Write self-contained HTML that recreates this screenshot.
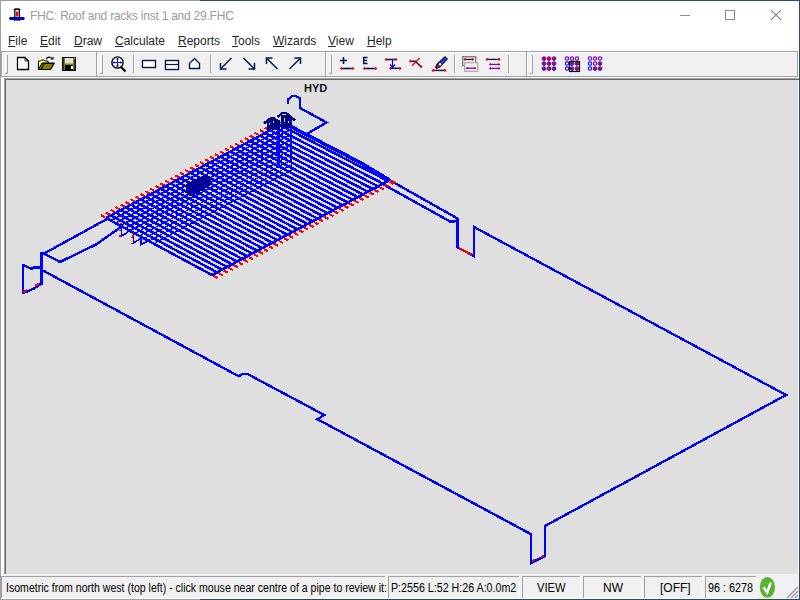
<!DOCTYPE html>
<html><head><meta charset="utf-8">
<style>
*{margin:0;padding:0;box-sizing:border-box}
html,body{width:800px;height:600px;overflow:hidden;background:#fff;font-family:"Liberation Sans",sans-serif}
.a{position:absolute}
.t{position:absolute;white-space:pre;font-size:12px;line-height:14px;color:#000}
.mn{color:#262626}
.mn u{text-decoration:underline;text-underline-offset:1px;text-decoration-thickness:1px}
</style></head><body>
<!-- window borders -->
<div class="a" style="left:0;top:0;width:200px;height:1px;background:#9a9a9a"></div>
<div class="a" style="left:200px;top:0;width:600px;height:1px;background:#2e4a62"></div>
<div class="a" style="left:0;top:0;width:1px;height:600px;background:#a0a0a0"></div>
<div class="a" style="left:799px;top:0;width:1px;height:600px;background:#2e4a62"></div>
<div class="a" style="left:0;top:599px;width:200px;height:1px;background:#a0a0a0"></div>
<div class="a" style="left:200px;top:599px;width:600px;height:1px;background:#2e4a62"></div>

<!-- title bar -->
<svg class="a" style="left:8px;top:7px" width="18" height="16" viewBox="0 0 18 16">
  <rect x="1.2" y="10" width="15.4" height="3" rx="1" fill="#0000c8"/>
  <rect x="5.5" y="12" width="7" height="1.6" fill="#000070"/>
  <path d="M5 3L7 1.2H11L13 3Z" fill="#001050"/>
  <rect x="6.2" y="3" width="1.3" height="7.5" fill="#000020"/>
  <rect x="10.7" y="3" width="1.3" height="7.5" fill="#000020"/>
  <rect x="8" y="4.5" width="2.3" height="5" fill="#ff0000"/>
</svg>
<div class="t" id="title" style="left:30px;top:9px;color:#9c9c9c;font-size:12px;letter-spacing:-0.23px">FHC: Roof and racks inst 1 and 29.FHC</div>
<div class="a" style="left:680px;top:15px;width:10px;height:1px;background:#8a8a8a"></div>
<div class="a" style="left:725px;top:10px;width:10px;height:10px;border:1px solid #8a8a8a"></div>
<svg class="a" style="left:770px;top:9px" width="12" height="12"><path d="M1 1L11 11M11 1L1 11" stroke="#8a8a8a" stroke-width="1.1"/></svg>

<!-- menu -->
<div class="t mn" style="left:8px;top:34px"><u>F</u>ile</div>
<div class="t mn" style="left:40px;top:34px"><u>E</u>dit</div>
<div class="t mn" style="left:74px;top:34px"><u>D</u>raw</div>
<div class="t mn" style="left:115px;top:34px"><u>C</u>alculate</div>
<div class="t mn" style="left:178px;top:34px"><u>R</u>eports</div>
<div class="t mn" style="left:232px;top:34px"><u>T</u>ools</div>
<div class="t mn" style="left:273px;top:34px"><u>W</u>izards</div>
<div class="t mn" style="left:328px;top:34px"><u>V</u>iew</div>
<div class="t mn" style="left:367px;top:34px"><u>H</u>elp</div>

<!-- toolbar -->
<div class="a" style="left:1px;top:51px;width:798px;height:27px;background:#f0f0f0"></div>
<div class="a" style="left:1px;top:51px;width:797px;height:1px;background:#a0a0a0"></div>
<div class="a" style="left:1px;top:51px;width:1px;height:26px;background:#a0a0a0"></div>
<div class="a" style="left:2px;top:52px;width:795px;height:1px;background:#fff"></div>
<div class="a" style="left:2px;top:52px;width:1px;height:24px;background:#fff"></div>
<div class="a" style="left:1px;top:76px;width:797px;height:1px;background:#a0a0a0"></div>
<div class="a" style="left:797px;top:51px;width:1px;height:26px;background:#a0a0a0"></div>
<div class="a" style="left:1px;top:77px;width:798px;height:1px;background:#fff"></div>
<div class="a" style="left:798px;top:51px;width:1px;height:27px;background:#fff"></div>

<!-- canvas -->
<div class="a" style="left:1px;top:78px;width:798px;height:496px;background:#fff"></div>
<div class="a" style="left:4px;top:78px;width:794px;height:496px;background:#dfdfdf"></div>
<div class="a" style="left:4px;top:78px;width:795px;height:1px;background:#a0a0a0"></div>
<div class="a" style="left:4px;top:78px;width:1px;height:496px;background:#a0a0a0"></div>
<div class="a" style="left:5px;top:79px;width:794px;height:1px;background:#696969"></div>
<div class="a" style="left:5px;top:79px;width:1px;height:495px;background:#696969"></div>

<!-- status bar -->
<div class="a" style="left:1px;top:574px;width:798px;height:25px;background:#f0f0f0"></div>
<div class="a" style="left:1px;top:576px;width:384px;height:1px;background:#a0a0a0"></div>
<div class="a" style="left:1px;top:576px;width:1px;height:22px;background:#a0a0a0"></div>
<div class="a" style="left:385px;top:576px;width:1px;height:23px;background:#fff"></div>
<div class="a" style="left:1px;top:598px;width:385px;height:1px;background:#fff"></div>
<div class="a" style="left:388px;top:576px;width:131px;height:1px;background:#a0a0a0"></div>
<div class="a" style="left:388px;top:576px;width:1px;height:22px;background:#a0a0a0"></div>
<div class="a" style="left:519px;top:576px;width:1px;height:23px;background:#fff"></div>
<div class="a" style="left:388px;top:598px;width:132px;height:1px;background:#fff"></div>
<div class="a" style="left:522px;top:576px;width:58px;height:1px;background:#a0a0a0"></div>
<div class="a" style="left:522px;top:576px;width:1px;height:22px;background:#a0a0a0"></div>
<div class="a" style="left:580px;top:576px;width:1px;height:23px;background:#fff"></div>
<div class="a" style="left:522px;top:598px;width:59px;height:1px;background:#fff"></div>
<div class="a" style="left:583px;top:576px;width:58px;height:1px;background:#a0a0a0"></div>
<div class="a" style="left:583px;top:576px;width:1px;height:22px;background:#a0a0a0"></div>
<div class="a" style="left:641px;top:576px;width:1px;height:23px;background:#fff"></div>
<div class="a" style="left:583px;top:598px;width:59px;height:1px;background:#fff"></div>
<div class="a" style="left:644px;top:576px;width:58px;height:1px;background:#a0a0a0"></div>
<div class="a" style="left:644px;top:576px;width:1px;height:22px;background:#a0a0a0"></div>
<div class="a" style="left:702px;top:576px;width:1px;height:23px;background:#fff"></div>
<div class="a" style="left:644px;top:598px;width:59px;height:1px;background:#fff"></div>
<div class="a" style="left:705px;top:576px;width:51px;height:1px;background:#a0a0a0"></div>
<div class="a" style="left:705px;top:576px;width:1px;height:22px;background:#a0a0a0"></div>
<div class="a" style="left:756px;top:576px;width:1px;height:23px;background:#fff"></div>
<div class="a" style="left:705px;top:598px;width:52px;height:1px;background:#fff"></div>
<div class="t" style="left:6px;top:581px;transform-origin:0 0;transform:scaleX(0.88)">Isometric from north west (top left) - click mouse near centre of a pipe to review it:</div>
<div class="t" style="left:391px;top:581px;transform-origin:0 0;transform:scaleX(0.89)">P:2556 L:52 H:26 A:0.0m2</div>
<div class="t" style="left:537px;top:581px;transform-origin:0 0;transform:scaleX(0.93)">VIEW</div>
<div class="t" style="left:603px;top:581px;transform-origin:0 0;transform:scaleX(1.0)">NW</div>
<div class="t" style="left:660px;top:581px;transform-origin:0 0;transform:scaleX(1.0)">[OFF]</div>
<div class="t" style="left:708px;top:581px;transform-origin:0 0;transform:scaleX(0.9)">96 : 6278</div><svg class="a" style="left:0;top:570px" width="800" height="30">
<ellipse cx="767.4" cy="17.4" rx="7.6" ry="10.4" fill="#5cb22e"/>
<path d="M763.5 17.2L767.2 22.4L770.7 12.6" fill="none" stroke="#fff" stroke-width="2.6"/>
<g stroke="#a0a0a0" stroke-width="1.4"><line x1="787" y1="28" x2="798" y2="17"/><line x1="791" y1="28" x2="798" y2="21"/><line x1="795" y1="28" x2="798" y2="25"/></g>
</svg>

<svg id="draw" class="a" style="left:0;top:0" width="800" height="600"><defs><clipPath id="cv"><rect x="6" y="80" width="792" height="494"/></clipPath></defs><g clip-path="url(#cv)">
<g shape-rendering="crispEdges"><path d="M45 253L107 219" fill="none" stroke="#0000ff" stroke-width="2.4" stroke-linejoin="miter" />
<path d="M45 254L60 262L96 244.5L121 227" fill="none" stroke="#0000ff" stroke-width="2.4" stroke-linejoin="miter" />
<rect x="40" y="252" width="3" height="32.5" fill="#0000ff"/>
<rect x="40" y="252" width="5" height="2.5" fill="#0000ff"/>
<path d="M23 264V293.5M23 265L32 269L34 267.5L41 267.5M23.5 293L35 288L41.5 283.5" fill="none" stroke="#0000ff" stroke-width="2.4" stroke-linejoin="miter" />
<path d="M43 270.5L238.75 376.25L243 373.8L247.5 374L324.25 415L317.5 419.25L531 534.2V563L545 556V526L786 395L474 227V256L457.5 247.5V218.5L389.6 180.1" fill="none" stroke="#0000ff" stroke-width="2.4" stroke-linejoin="miter" />
<rect x="456.2" y="218" width="2.6" height="30" fill="#0000ff"/>
<path d="M381.75 183.5L450.4 221.7L457.7 221" fill="none" stroke="#0000ff" stroke-width="2.4" stroke-linejoin="miter" />
<path d="M288 104V99.5L292 96.2L296 96.2L300 98.5V108L326.5 122.5L307.5 133.5" fill="none" stroke="#0000ff" stroke-width="2.4" stroke-linejoin="miter" />
<line x1="106" y1="218" x2="212" y2="275" stroke="#0000ff" stroke-width="2.5"/>
<line x1="100.72" y1="215.16" x2="104.68" y2="217.29" stroke="#ff0000" stroke-width="2.1"/>
<line x1="213.59" y1="275.85" x2="217.72" y2="278.08" stroke="#ff0000" stroke-width="2.1"/>
<line x1="110.97" y1="215.34" x2="217.03" y2="272.31" stroke="#0000ff" stroke-width="2.5"/>
<line x1="105.69" y1="212.5" x2="109.65" y2="214.63" stroke="#ff0000" stroke-width="2.1"/>
<line x1="218.61" y1="273.17" x2="222.75" y2="275.39" stroke="#ff0000" stroke-width="2.1"/>
<line x1="115.94" y1="212.69" x2="222.06" y2="269.63" stroke="#0000ff" stroke-width="2.5"/>
<line x1="110.66" y1="209.85" x2="114.62" y2="211.98" stroke="#ff0000" stroke-width="2.1"/>
<line x1="223.64" y1="270.48" x2="227.78" y2="272.7" stroke="#ff0000" stroke-width="2.1"/>
<line x1="120.91" y1="210.03" x2="227.09" y2="266.94" stroke="#0000ff" stroke-width="2.5"/>
<line x1="115.63" y1="207.19" x2="119.59" y2="209.32" stroke="#ff0000" stroke-width="2.1"/>
<line x1="228.67" y1="267.79" x2="232.81" y2="270.01" stroke="#ff0000" stroke-width="2.1"/>
<line x1="125.89" y1="207.37" x2="232.11" y2="264.26" stroke="#0000ff" stroke-width="2.5"/>
<line x1="120.6" y1="204.54" x2="124.56" y2="206.66" stroke="#ff0000" stroke-width="2.1"/>
<line x1="233.7" y1="265.11" x2="237.84" y2="267.33" stroke="#ff0000" stroke-width="2.1"/>
<line x1="130.86" y1="204.71" x2="237.14" y2="261.57" stroke="#0000ff" stroke-width="2.5"/>
<line x1="125.57" y1="201.88" x2="129.53" y2="204.01" stroke="#ff0000" stroke-width="2.1"/>
<line x1="238.73" y1="262.42" x2="242.87" y2="264.64" stroke="#ff0000" stroke-width="2.1"/>
<line x1="135.83" y1="202.06" x2="242.17" y2="258.89" stroke="#0000ff" stroke-width="2.5"/>
<line x1="130.54" y1="199.23" x2="134.51" y2="201.35" stroke="#ff0000" stroke-width="2.1"/>
<line x1="243.76" y1="259.73" x2="247.9" y2="261.95" stroke="#ff0000" stroke-width="2.1"/>
<line x1="140.8" y1="199.4" x2="247.2" y2="256.2" stroke="#0000ff" stroke-width="2.5"/>
<line x1="135.51" y1="196.57" x2="139.48" y2="198.69" stroke="#ff0000" stroke-width="2.1"/>
<line x1="248.79" y1="257.05" x2="252.93" y2="259.26" stroke="#ff0000" stroke-width="2.1"/>
<line x1="145.77" y1="196.74" x2="252.23" y2="253.51" stroke="#0000ff" stroke-width="2.5"/>
<line x1="140.48" y1="193.92" x2="144.45" y2="196.04" stroke="#ff0000" stroke-width="2.1"/>
<line x1="253.82" y1="254.36" x2="257.96" y2="256.57" stroke="#ff0000" stroke-width="2.1"/>
<line x1="150.74" y1="194.09" x2="257.26" y2="250.83" stroke="#0000ff" stroke-width="2.5"/>
<line x1="145.45" y1="191.26" x2="149.42" y2="193.38" stroke="#ff0000" stroke-width="2.1"/>
<line x1="258.85" y1="251.67" x2="262.99" y2="253.88" stroke="#ff0000" stroke-width="2.1"/>
<line x1="155.71" y1="191.43" x2="262.29" y2="248.14" stroke="#0000ff" stroke-width="2.5"/>
<line x1="150.42" y1="188.61" x2="154.39" y2="190.72" stroke="#ff0000" stroke-width="2.1"/>
<line x1="263.87" y1="248.99" x2="268.02" y2="251.2" stroke="#ff0000" stroke-width="2.1"/>
<line x1="160.69" y1="188.77" x2="267.31" y2="245.46" stroke="#0000ff" stroke-width="2.5"/>
<line x1="155.39" y1="185.95" x2="159.36" y2="188.07" stroke="#ff0000" stroke-width="2.1"/>
<line x1="268.9" y1="246.3" x2="273.05" y2="248.51" stroke="#ff0000" stroke-width="2.1"/>
<line x1="165.66" y1="186.11" x2="272.34" y2="242.77" stroke="#0000ff" stroke-width="2.5"/>
<line x1="160.36" y1="183.3" x2="164.33" y2="185.41" stroke="#ff0000" stroke-width="2.1"/>
<line x1="273.93" y1="243.62" x2="278.08" y2="245.82" stroke="#ff0000" stroke-width="2.1"/>
<line x1="170.63" y1="183.46" x2="277.37" y2="240.09" stroke="#0000ff" stroke-width="2.5"/>
<line x1="165.33" y1="180.65" x2="169.3" y2="182.75" stroke="#ff0000" stroke-width="2.1"/>
<line x1="278.96" y1="240.93" x2="283.11" y2="243.13" stroke="#ff0000" stroke-width="2.1"/>
<line x1="175.6" y1="180.8" x2="282.4" y2="237.4" stroke="#0000ff" stroke-width="2.5"/>
<line x1="170.3" y1="177.99" x2="174.27" y2="180.1" stroke="#ff0000" stroke-width="2.1"/>
<line x1="283.99" y1="238.24" x2="288.14" y2="240.44" stroke="#ff0000" stroke-width="2.1"/>
<line x1="180.57" y1="178.14" x2="287.43" y2="234.71" stroke="#0000ff" stroke-width="2.5"/>
<line x1="175.27" y1="175.34" x2="179.25" y2="177.44" stroke="#ff0000" stroke-width="2.1"/>
<line x1="289.02" y1="235.56" x2="293.17" y2="237.76" stroke="#ff0000" stroke-width="2.1"/>
<line x1="185.54" y1="175.49" x2="292.46" y2="232.03" stroke="#0000ff" stroke-width="2.5"/>
<line x1="180.24" y1="172.68" x2="184.22" y2="174.78" stroke="#ff0000" stroke-width="2.1"/>
<line x1="294.05" y1="232.87" x2="298.2" y2="235.07" stroke="#ff0000" stroke-width="2.1"/>
<line x1="190.51" y1="172.83" x2="297.49" y2="229.34" stroke="#0000ff" stroke-width="2.5"/>
<line x1="185.21" y1="170.03" x2="189.19" y2="172.13" stroke="#ff0000" stroke-width="2.1"/>
<line x1="299.08" y1="230.18" x2="303.23" y2="232.38" stroke="#ff0000" stroke-width="2.1"/>
<line x1="195.49" y1="170.17" x2="302.51" y2="226.66" stroke="#0000ff" stroke-width="2.5"/>
<line x1="190.18" y1="167.37" x2="194.16" y2="169.47" stroke="#ff0000" stroke-width="2.1"/>
<line x1="304.11" y1="227.5" x2="308.26" y2="229.69" stroke="#ff0000" stroke-width="2.1"/>
<line x1="200.46" y1="167.51" x2="307.54" y2="223.97" stroke="#0000ff" stroke-width="2.5"/>
<line x1="195.15" y1="164.72" x2="199.13" y2="166.81" stroke="#ff0000" stroke-width="2.1"/>
<line x1="309.14" y1="224.81" x2="313.29" y2="227" stroke="#ff0000" stroke-width="2.1"/>
<line x1="205.43" y1="164.86" x2="312.57" y2="221.29" stroke="#0000ff" stroke-width="2.5"/>
<line x1="200.12" y1="162.06" x2="204.1" y2="164.16" stroke="#ff0000" stroke-width="2.1"/>
<line x1="314.16" y1="222.12" x2="318.32" y2="224.31" stroke="#ff0000" stroke-width="2.1"/>
<line x1="210.4" y1="162.2" x2="317.6" y2="218.6" stroke="#0000ff" stroke-width="2.5"/>
<line x1="205.09" y1="159.41" x2="209.07" y2="161.5" stroke="#ff0000" stroke-width="2.1"/>
<line x1="319.19" y1="219.44" x2="323.35" y2="221.63" stroke="#ff0000" stroke-width="2.1"/>
<line x1="215.37" y1="159.54" x2="322.63" y2="215.91" stroke="#0000ff" stroke-width="2.5"/>
<line x1="210.06" y1="156.75" x2="214.04" y2="158.85" stroke="#ff0000" stroke-width="2.1"/>
<line x1="324.22" y1="216.75" x2="328.38" y2="218.94" stroke="#ff0000" stroke-width="2.1"/>
<line x1="220.34" y1="156.89" x2="327.66" y2="213.23" stroke="#0000ff" stroke-width="2.5"/>
<line x1="215.03" y1="154.1" x2="219.01" y2="156.19" stroke="#ff0000" stroke-width="2.1"/>
<line x1="329.25" y1="214.07" x2="333.41" y2="216.25" stroke="#ff0000" stroke-width="2.1"/>
<line x1="225.31" y1="154.23" x2="332.69" y2="210.54" stroke="#0000ff" stroke-width="2.5"/>
<line x1="220" y1="151.44" x2="223.99" y2="153.53" stroke="#ff0000" stroke-width="2.1"/>
<line x1="334.28" y1="211.38" x2="338.44" y2="213.56" stroke="#ff0000" stroke-width="2.1"/>
<line x1="230.29" y1="151.57" x2="337.71" y2="207.86" stroke="#0000ff" stroke-width="2.5"/>
<line x1="224.97" y1="148.79" x2="228.96" y2="150.88" stroke="#ff0000" stroke-width="2.1"/>
<line x1="339.31" y1="208.69" x2="343.47" y2="210.87" stroke="#ff0000" stroke-width="2.1"/>
<line x1="235.26" y1="148.91" x2="342.74" y2="205.17" stroke="#0000ff" stroke-width="2.5"/>
<line x1="229.94" y1="146.13" x2="233.93" y2="148.22" stroke="#ff0000" stroke-width="2.1"/>
<line x1="344.34" y1="206.01" x2="348.5" y2="208.19" stroke="#ff0000" stroke-width="2.1"/>
<line x1="240.23" y1="146.26" x2="347.77" y2="202.49" stroke="#0000ff" stroke-width="2.5"/>
<line x1="234.91" y1="143.48" x2="238.9" y2="145.56" stroke="#ff0000" stroke-width="2.1"/>
<line x1="349.37" y1="203.32" x2="353.53" y2="205.5" stroke="#ff0000" stroke-width="2.1"/>
<line x1="245.2" y1="143.6" x2="352.8" y2="199.8" stroke="#0000ff" stroke-width="2.5"/>
<line x1="239.88" y1="140.82" x2="243.87" y2="142.91" stroke="#ff0000" stroke-width="2.1"/>
<line x1="354.4" y1="200.63" x2="358.56" y2="202.81" stroke="#ff0000" stroke-width="2.1"/>
<line x1="250.17" y1="140.94" x2="357.83" y2="197.11" stroke="#0000ff" stroke-width="2.5"/>
<line x1="244.85" y1="138.17" x2="248.84" y2="140.25" stroke="#ff0000" stroke-width="2.1"/>
<line x1="359.42" y1="197.95" x2="363.59" y2="200.12" stroke="#ff0000" stroke-width="2.1"/>
<line x1="255.14" y1="138.29" x2="362.86" y2="194.43" stroke="#0000ff" stroke-width="2.5"/>
<line x1="249.82" y1="135.51" x2="253.81" y2="137.59" stroke="#ff0000" stroke-width="2.1"/>
<line x1="364.45" y1="195.26" x2="368.62" y2="197.43" stroke="#ff0000" stroke-width="2.1"/>
<line x1="260.11" y1="135.63" x2="367.89" y2="191.74" stroke="#0000ff" stroke-width="2.5"/>
<line x1="254.79" y1="132.86" x2="258.78" y2="134.94" stroke="#ff0000" stroke-width="2.1"/>
<line x1="369.48" y1="192.57" x2="373.65" y2="194.74" stroke="#ff0000" stroke-width="2.1"/>
<line x1="265.09" y1="132.97" x2="372.91" y2="189.06" stroke="#0000ff" stroke-width="2.5"/>
<line x1="259.76" y1="130.2" x2="263.75" y2="132.28" stroke="#ff0000" stroke-width="2.1"/>
<line x1="374.51" y1="189.89" x2="378.68" y2="192.06" stroke="#ff0000" stroke-width="2.1"/>
<line x1="270.06" y1="130.31" x2="377.94" y2="186.37" stroke="#0000ff" stroke-width="2.5"/>
<line x1="264.73" y1="127.55" x2="268.73" y2="129.62" stroke="#ff0000" stroke-width="2.1"/>
<line x1="379.54" y1="187.2" x2="383.71" y2="189.37" stroke="#ff0000" stroke-width="2.1"/>
<line x1="275.03" y1="127.66" x2="382.97" y2="183.69" stroke="#0000ff" stroke-width="2.5"/>
<line x1="269.7" y1="124.89" x2="273.7" y2="126.97" stroke="#ff0000" stroke-width="2.1"/>
<line x1="384.57" y1="184.51" x2="388.74" y2="186.68" stroke="#ff0000" stroke-width="2.1"/>
<line x1="280" y1="125" x2="388" y2="181" stroke="#0000ff" stroke-width="2.5"/>
<line x1="274.67" y1="122.24" x2="278.67" y2="124.31" stroke="#ff0000" stroke-width="2.1"/>
<line x1="389.6" y1="181.83" x2="393.77" y2="183.99" stroke="#ff0000" stroke-width="2.1"/>
<line x1="212" y1="275" x2="388" y2="181" stroke="#0000ff" stroke-width="2.6"/>
<line x1="106" y1="218" x2="280" y2="125" stroke="#0000ff" stroke-width="2.4"/>
<line x1="110.77" y1="220.56" x2="284.86" y2="127.52" stroke="#0000ff" stroke-width="1.7"/>
<line x1="115.54" y1="223.13" x2="289.72" y2="130.04" stroke="#0000ff" stroke-width="1.7"/>
<line x1="120.31" y1="225.69" x2="292" y2="133.94" stroke="#0000ff" stroke-width="1.7"/>
<line x1="125.08" y1="228.26" x2="292" y2="139.06" stroke="#0000ff" stroke-width="1.7"/>
<line x1="129.85" y1="230.82" x2="292" y2="144.17" stroke="#0000ff" stroke-width="1.7"/>
<line x1="134.62" y1="233.39" x2="292" y2="149.29" stroke="#0000ff" stroke-width="1.2"/>
<line x1="139.39" y1="235.96" x2="292" y2="154.41" stroke="#0000ff" stroke-width="1.2"/>
<line x1="144.16" y1="238.52" x2="292" y2="159.52" stroke="#0000ff" stroke-width="1.2"/>
<line x1="148.93" y1="241.09" x2="292" y2="164.64" stroke="#0000ff" stroke-width="1.2"/>
<line x1="153.7" y1="243.65" x2="292" y2="169.76" stroke="#0000ff" stroke-width="1.2"/>
<path d="M283 122.5L360 162.5L389.6 180.1" fill="none" stroke="#0000ff" stroke-width="3.6" stroke-linejoin="miter" />
<rect x="277" y="120" width="3" height="45" fill="#0000ff"/>
<rect x="290" y="118" width="2" height="45" fill="#0000ff"/>
<path d="M121.3 223.5V236L127.5 232.5V227" fill="none" stroke="#0000ff" stroke-width="1.6" stroke-linejoin="miter" />
<path d="M133.3 232V243L141 238.5V244.5L150 240" fill="none" stroke="#0000ff" stroke-width="1.6" stroke-linejoin="miter" />
<rect x="120" y="222.7" width="2.2" height="1.6" fill="#ff0000"/>
<rect x="119" y="229.7" width="2.2" height="1.6" fill="#ff0000"/>
<rect x="119" y="235.2" width="2.2" height="1.6" fill="#ff0000"/>
<rect x="130.5" y="236.7" width="2.2" height="1.6" fill="#ff0000"/>
<rect x="132" y="235.2" width="2.2" height="1.6" fill="#ff0000"/>
<rect x="131" y="242.7" width="2.2" height="1.6" fill="#ff0000"/>
<line x1="23" y1="292.5" x2="27" y2="290" stroke="#ff0000" stroke-width="2"/>
<line x1="35" y1="286" x2="39" y2="283.5" stroke="#ff0000" stroke-width="2"/>
<line x1="532" y1="561" x2="535" y2="559.5" stroke="#ff0000" stroke-width="2"/>
<line x1="541" y1="557" x2="544" y2="555.5" stroke="#ff0000" stroke-width="2"/>
<line x1="459" y1="248" x2="472" y2="255" stroke="#ff0000" stroke-width="2"/>
<line x1="391" y1="180.5" x2="395" y2="183" stroke="#ff0000" stroke-width="2.2"/>
<path d="M264 123.5L268.5 119.5L271.5 117.8L274 118L280.5 123.5" fill="none" stroke="#000080" stroke-width="2.4"/>
<path d="M267 120L275 119L280 123V130H267Z" fill="#000080"/>
<rect x="269" y="122.5" width="1.2" height="2.5" fill="#dfdfdf"/><rect x="272.5" y="120.5" width="1.2" height="2" fill="#dfdfdf"/>
<path d="M277.5 117L281.5 113.5L284.5 112.8L287.5 114L295 120.5" fill="none" stroke="#000080" stroke-width="2.4"/>
<path d="M280.5 115L288 114.5L290.5 117V128H280.5Z" fill="#000080"/>
<rect x="283.8" y="117.8" width="1.2" height="4" fill="#dfdfdf"/><rect x="287.5" y="120.5" width="1.2" height="2" fill="#dfdfdf"/>
<path d="M186 184L206 174.5L211 178V185L193 196H189L186 190Z" fill="#000080"/>
<path d="M188 189L208 178M190 194L210 183" stroke="#0000ff" stroke-width="1"/></g><text x="304" y="92" font-family="Liberation Sans" font-weight="bold" font-size="11" fill="#101010">HYD</text>
</g></svg>
<svg id="tb" class="a" style="left:0;top:0" width="800" height="80">
<rect x="96" y="52" width="1" height="24" fill="#a0a0a0"/>
<rect x="97" y="52" width="1" height="24" fill="#ffffff"/>
<rect x="325" y="52" width="1" height="24" fill="#a0a0a0"/>
<rect x="326" y="52" width="1" height="24" fill="#ffffff"/>
<rect x="526" y="52" width="1" height="24" fill="#a0a0a0"/>
<rect x="527" y="52" width="1" height="24" fill="#ffffff"/>
<rect x="5" y="55" width="1" height="18" fill="#ffffff"/>
<rect x="5" y="55" width="3" height="1" fill="#ffffff"/>
<rect x="7" y="55" width="1" height="19" fill="#a0a0a0"/>
<rect x="5" y="73" width="3" height="1" fill="#a0a0a0"/>
<rect x="100" y="55" width="1" height="18" fill="#ffffff"/>
<rect x="100" y="55" width="3" height="1" fill="#ffffff"/>
<rect x="102" y="55" width="1" height="19" fill="#a0a0a0"/>
<rect x="100" y="73" width="3" height="1" fill="#a0a0a0"/>
<rect x="329" y="55" width="1" height="18" fill="#ffffff"/>
<rect x="329" y="55" width="3" height="1" fill="#ffffff"/>
<rect x="331" y="55" width="1" height="19" fill="#a0a0a0"/>
<rect x="329" y="73" width="3" height="1" fill="#a0a0a0"/>
<rect x="530" y="55" width="1" height="18" fill="#ffffff"/>
<rect x="530" y="55" width="3" height="1" fill="#ffffff"/>
<rect x="532" y="55" width="1" height="19" fill="#a0a0a0"/>
<rect x="530" y="73" width="3" height="1" fill="#a0a0a0"/>
<rect x="133" y="55" width="1" height="18" fill="#a0a0a0"/>
<rect x="134" y="55" width="1" height="18" fill="#ffffff"/>
<rect x="210" y="55" width="1" height="18" fill="#a0a0a0"/>
<rect x="211" y="55" width="1" height="18" fill="#ffffff"/>
<rect x="454" y="55" width="1" height="18" fill="#a0a0a0"/>
<rect x="455" y="55" width="1" height="18" fill="#ffffff"/>
<rect x="508" y="55" width="1" height="18" fill="#a0a0a0"/>
<rect x="509" y="55" width="1" height="18" fill="#ffffff"/>
<path d="M17.5 57.5H25L28.5 61V69.5H17.5Z" fill="#fff" stroke="#000" stroke-width="1.3"/>
<path d="M25 57.5V61H28.5" fill="none" stroke="#000" stroke-width="0.8"/>
<path d="M38.5 63V69.5H50L53.5 63Z" fill="#808000" stroke="#000" stroke-width="1.2"/>
<path d="M38.5 69.5V61H40.5L41.5 60H44L45 61H48V63H42Z" fill="#ffff40" stroke="#000" stroke-width="1"/>
<path d="M41 69.5L44 63.5H54L50.5 69.5Z" fill="#808000" stroke="#000" stroke-width="1.2"/>
<path d="M46 59Q49 55.5 52 58.5" fill="none" stroke="#000" stroke-width="1.2"/><path d="M50.5 59.5H53.5V56.5Z" fill="#000"/>
<rect x="62" y="57" width="14" height="14" fill="#000"/>
<rect x="63.5" y="58" width="11" height="12" fill="#808000"/>
<rect x="65" y="58" width="8" height="5.5" fill="#e0e0e0"/>
<rect x="65" y="65" width="8" height="5" fill="#000"/>
<rect x="71" y="66" width="2" height="3" fill="#fff"/>
<rect x="74" y="58" width="1" height="1" fill="#fff"/>
<line x1="121" y1="67" x2="125.5" y2="71.5" stroke="#000" stroke-width="2.2"/>
<circle cx="117.5" cy="62.5" r="5.6" fill="#fff" stroke="#000" stroke-width="1.4"/>
<path d="M113 62.5H122M117.5 58V67" stroke="#0010e0" stroke-width="1.1"/>
<path d="M112.5 62.5l2-1.6v3.2zM122.5 62.5l-2-1.6v3.2zM117.5 57.5l-1.6 2h3.2zM117.5 67.5l-1.6-2h3.2z" fill="#0010e0"/>
<rect x="142.5" y="60.5" width="13" height="7" fill="#fff" stroke="#0a1450" stroke-width="1.4"/>
<rect x="165.5" y="60.5" width="13" height="9" fill="#fff" stroke="#0a1450" stroke-width="1.4"/>
<line x1="165" y1="64.5" x2="179" y2="64.5" stroke="#0a1450" stroke-width="1.2"/>
<path d="M189.5 68.5V63.5L194.5 58.5L199.5 63.5V68.5Z" fill="#fff" stroke="#0a1450" stroke-width="1.4"/>
<line x1="231.5" y1="58" x2="220.5" y2="69" stroke="#0a1450" stroke-width="1.5"/>
<path d="M220.5 63V69H226.5" fill="none" stroke="#0a1450" stroke-width="1.5"/>
<line x1="243.5" y1="58" x2="254.5" y2="69" stroke="#0a1450" stroke-width="1.5"/>
<path d="M254.5 63V69H248.5" fill="none" stroke="#0a1450" stroke-width="1.5"/>
<line x1="277.5" y1="69" x2="266.5" y2="58" stroke="#0a1450" stroke-width="1.5"/>
<path d="M266.5 64V58H272.5" fill="none" stroke="#0a1450" stroke-width="1.5"/>
<line x1="289.5" y1="69" x2="300.5" y2="58" stroke="#0a1450" stroke-width="1.5"/>
<path d="M300.5 64V58H294.5" fill="none" stroke="#0a1450" stroke-width="1.5"/>
<path d="M340 60.5H347M343.5 57V64" stroke="#0a1450" stroke-width="1.6"/>
<line x1="341.5" y1="68.5" x2="352.5" y2="68.5" stroke="#0a1450" stroke-width="1.6"/>
<path d="M339.7 68.5L341.3 66.9L342.90000000000003 68.5L341.3 70.1Z" fill="#ff0000"/>
<path d="M351.2 68.5L352.8 66.9L354.40000000000003 68.5L352.8 70.1Z" fill="#ff0000"/>
<path d="M367.5 57.5H363.7V63.6H367.5M363.7 60.5H367" fill="none" stroke="#0a1450" stroke-width="1.5"/>
<line x1="364.5" y1="68.5" x2="375.5" y2="68.5" stroke="#0a1450" stroke-width="1.6"/>
<path d="M362.79999999999995 68.5L364.4 66.9L366.0 68.5L364.4 70.1Z" fill="#ff0000"/>
<path d="M374.2 68.5L375.8 66.9L377.40000000000003 68.5L375.8 70.1Z" fill="#ff0000"/>
<line x1="386" y1="59.5" x2="396" y2="59.5" stroke="#0a1450" stroke-width="1.6"/>
<path d="M384.4 59.5L386 57.9L387.6 59.5L386 61.1Z" fill="#ff0000"/>
<path d="M394.4 59.5L396 57.9L397.6 59.5L396 61.1Z" fill="#ff0000"/>
<line x1="390.5" y1="68.3" x2="400" y2="68.3" stroke="#0a1450" stroke-width="1.6"/>
<path d="M388.9 68.3L390.5 66.7L392.1 68.3L390.5 69.89999999999999Z" fill="#ff0000"/>
<path d="M398.4 68.3L400 66.7L401.6 68.3L400 69.89999999999999Z" fill="#ff0000"/>
<path d="M392.5 59.5V67.5M390 64.5L392.5 67.5L395 64.5" fill="none" stroke="#0000d0" stroke-width="1.2"/>
<path d="M410.5 61.2H415.3L421 66.7" fill="none" stroke="#0a1450" stroke-width="1.5"/>
<line x1="419.6" y1="58" x2="412" y2="65.7" stroke="#ff0000" stroke-width="1.3"/>
<path d="M408.9 61.2L410.5 59.6L412.1 61.2L410.5 62.800000000000004Z" fill="#ff0000"/>
<path d="M419.4 66.7L421 65.10000000000001L422.6 66.7L421 68.3Z" fill="#ff0000"/>
<path d="M445 56L448 59L440 67.5L436.5 69L435 67.5L436.5 64Z" fill="#000"/>
<path d="M445 57.5L446.8 59.2L442 64L440.2 62.3Z" fill="#2040ff"/>
<path d="M440 62.6L441.7 64.3L440 66L438.3 64.3Z" fill="#f0f0f0"/>
<path d="M438 64.6L439.7 66.3L437.5 67.8L436.3 67L437 65.5Z" fill="#d000a0"/>
<line x1="433" y1="70.4" x2="445" y2="70.4" stroke="#0a1450" stroke-width="1.5"/>
<path d="M431.4 70.4L433 68.80000000000001L434.6 70.4L433 72.0Z" fill="#ff0000"/>
<path d="M443.4 70.4L445 68.80000000000001L446.6 70.4L445 72.0Z" fill="#ff0000"/>
<rect x="462.7" y="56.7" width="13" height="8.8" fill="#f0f0f0" stroke="#707070" stroke-width="1.2"/>
<line x1="465" y1="59.4" x2="472.7" y2="59.4" stroke="#0a1450" stroke-width="1.3"/>
<path d="M463.4 59.4L465 57.8L466.6 59.4L465 61.0Z" fill="#ff0000"/>
<path d="M471.09999999999997 59.4L472.7 57.8L474.3 59.4L472.7 61.0Z" fill="#ff0000"/>
<rect x="464.7" y="62.7" width="13" height="8.6" fill="#f0f0f0" stroke="#a8a8a8" stroke-width="1.2"/>
<line x1="467" y1="68.2" x2="475" y2="68.2" stroke="#9000c0" stroke-width="1.3"/>
<path d="M465.7 68.2L467 66.9L468.3 68.2L467 69.5Z" fill="#a00070"/>
<path d="M473.7 68.2L475 66.9L476.3 68.2L475 69.5Z" fill="#a00070"/>
<line x1="487" y1="59.4" x2="499" y2="59.4" stroke="#0a1450" stroke-width="1.4"/>
<path d="M485.4 59.4L487 57.8L488.6 59.4L487 61.0Z" fill="#ff0000"/>
<path d="M497.4 59.4L499 57.8L500.6 59.4L499 61.0Z" fill="#ff0000"/>
<line x1="490.3" y1="64.4" x2="499" y2="64.4" stroke="#9000c0" stroke-width="1.3"/>
<path d="M489.0 64.4L490.3 63.10000000000001L491.6 64.4L490.3 65.7Z" fill="#a00070"/>
<path d="M497.7 64.4L499 63.10000000000001L500.3 64.4L499 65.7Z" fill="#a00070"/>
<line x1="490.3" y1="68.4" x2="499" y2="68.4" stroke="#9000c0" stroke-width="1.3"/>
<path d="M489.0 68.4L490.3 67.10000000000001L491.6 68.4L490.3 69.7Z" fill="#a00070"/>
<path d="M497.7 68.4L499 67.10000000000001L500.3 68.4L499 69.7Z" fill="#a00070"/>
<circle cx="544" cy="58.6" r="1.9" fill="#d00000" stroke="#8000e0" stroke-width="0.9"/>
<circle cx="549" cy="58.6" r="1.9" fill="#d00000" stroke="#8000e0" stroke-width="0.9"/>
<circle cx="554" cy="58.6" r="1.9" fill="#d00000" stroke="#8000e0" stroke-width="0.9"/>
<circle cx="544" cy="63.6" r="1.9" fill="#d00000" stroke="#2020ff" stroke-width="0.9"/>
<circle cx="549" cy="63.6" r="1.9" fill="#d00000" stroke="#2020ff" stroke-width="0.9"/>
<circle cx="554" cy="63.6" r="1.9" fill="#d00000" stroke="#2020ff" stroke-width="0.9"/>
<circle cx="544" cy="68.6" r="1.9" fill="#d00000" stroke="#2020ff" stroke-width="0.9"/>
<circle cx="549" cy="68.6" r="1.9" fill="#d00000" stroke="#2020ff" stroke-width="0.9"/>
<circle cx="554" cy="68.6" r="1.9" fill="#d00000" stroke="#2020ff" stroke-width="0.9"/>
<circle cx="567" cy="58.6" r="1.7" fill="none" stroke="#8000e0" stroke-width="1.1"/>
<circle cx="572" cy="58.6" r="1.7" fill="none" stroke="#8000e0" stroke-width="1.1"/>
<circle cx="577" cy="58.6" r="1.7" fill="none" stroke="#8000e0" stroke-width="1.1"/>
<circle cx="567" cy="63.6" r="1.7" fill="none" stroke="#1010ff" stroke-width="1.1"/>
<circle cx="572" cy="63.6" r="1.9" fill="#d00000" stroke="#2020ff" stroke-width="0.9"/>
<circle cx="577" cy="63.6" r="1.9" fill="#d00000" stroke="#2020ff" stroke-width="0.9"/>
<circle cx="567" cy="68.6" r="1.7" fill="none" stroke="#1010ff" stroke-width="1.1"/>
<circle cx="572" cy="68.6" r="1.9" fill="#d00000" stroke="#2020ff" stroke-width="0.9"/>
<circle cx="577" cy="68.6" r="1.9" fill="#d00000" stroke="#2020ff" stroke-width="0.9"/>
<circle cx="590" cy="58.6" r="1.7" fill="none" stroke="#8000e0" stroke-width="1.1"/>
<circle cx="595" cy="58.6" r="1.7" fill="none" stroke="#8000e0" stroke-width="1.1"/>
<circle cx="600" cy="58.6" r="1.7" fill="none" stroke="#8000e0" stroke-width="1.1"/>
<circle cx="590" cy="63.6" r="1.7" fill="none" stroke="#1010ff" stroke-width="1.1"/>
<circle cx="595" cy="63.6" r="1.7" fill="none" stroke="#8000e0" stroke-width="1.1"/>
<circle cx="600" cy="63.6" r="1.9" fill="#d00000" stroke="#2020ff" stroke-width="0.9"/>
<circle cx="590" cy="68.6" r="1.7" fill="none" stroke="#1010ff" stroke-width="1.1"/>
<circle cx="595" cy="68.6" r="1.9" fill="#d00000" stroke="#2020ff" stroke-width="0.9"/>
<circle cx="600" cy="68.6" r="1.9" fill="#d00000" stroke="#2020ff" stroke-width="0.9"/>
<rect x="569.5" y="61.5" width="10" height="10" fill="none" stroke="#000" stroke-width="1.2"/>
</svg>
</body></html>
